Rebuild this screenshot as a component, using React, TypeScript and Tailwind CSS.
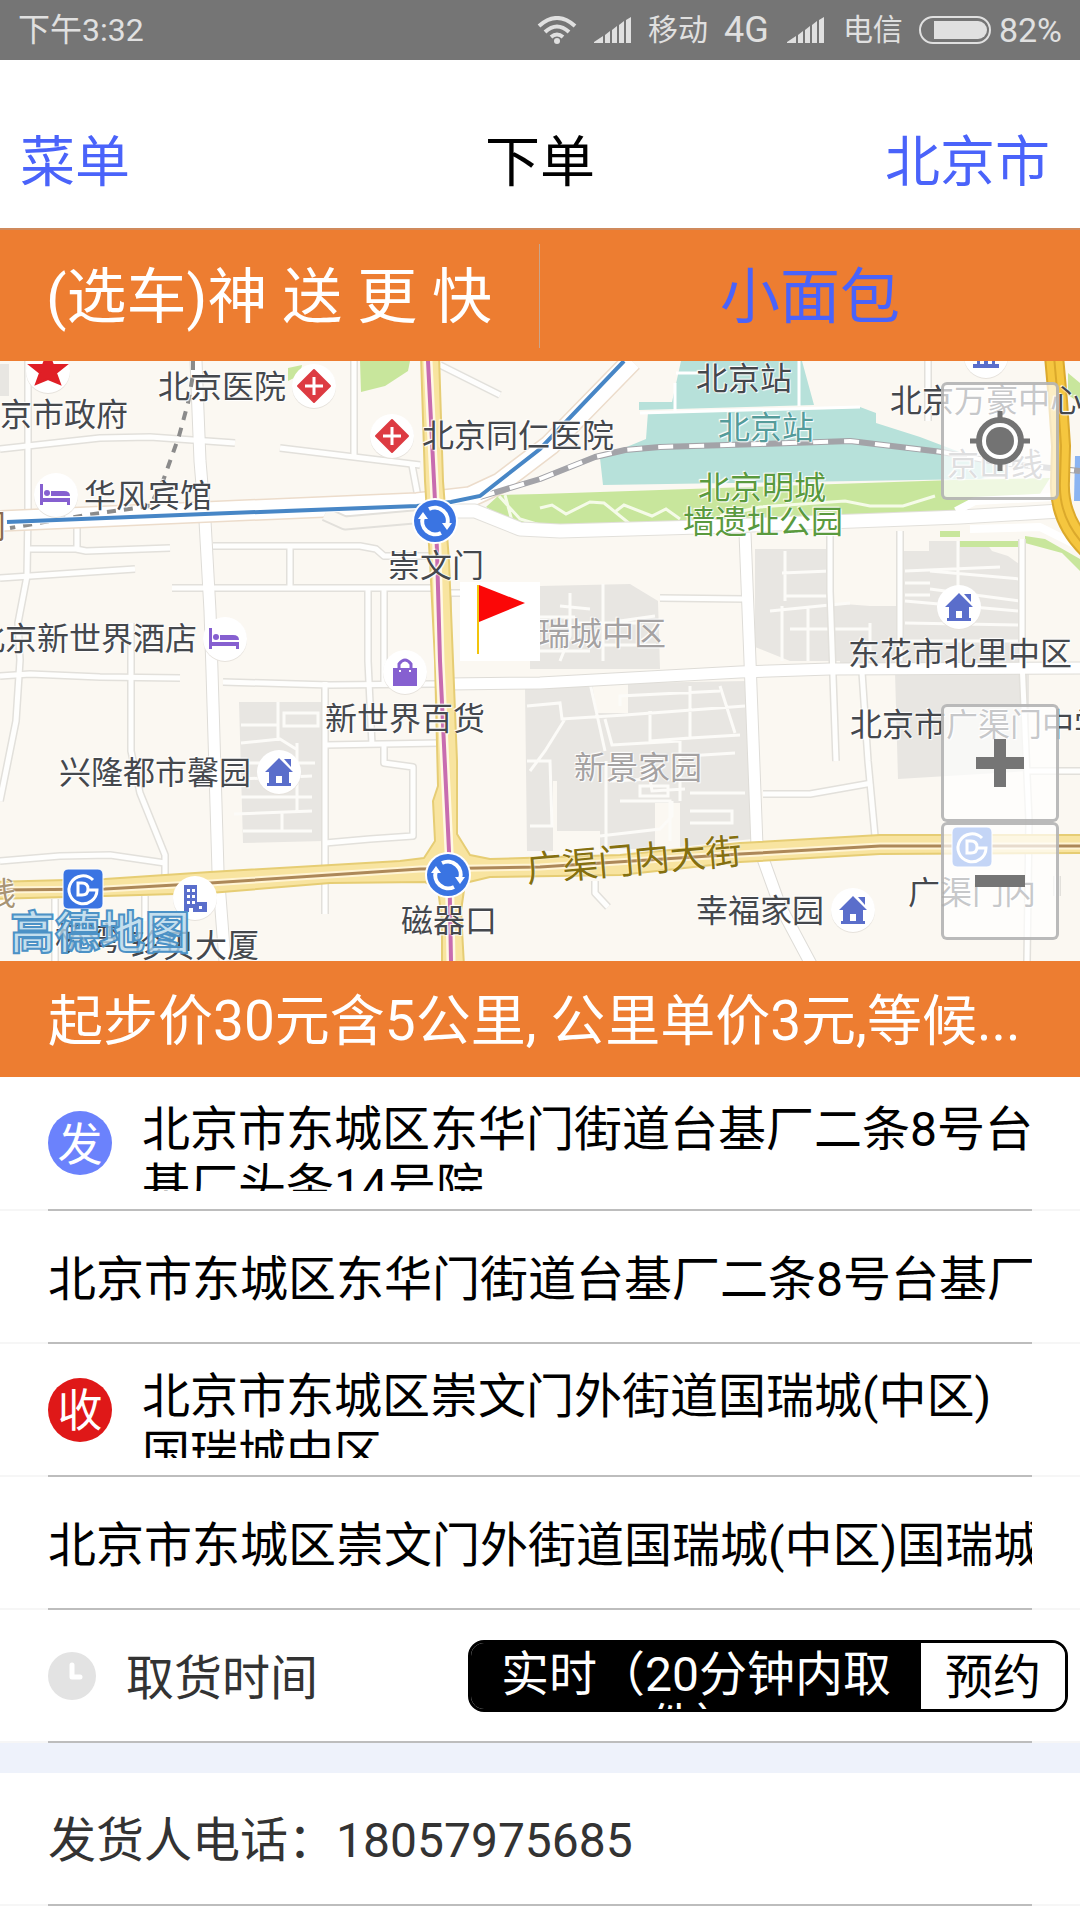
import { useState } from "react";

type Point = { x: number; y: number };

type Label = Point & {
  text: string;
  color?: string;
  right?: boolean;
};

const FONT = "font-[Roboto,'Noto_Sans_CJK_SC',sans-serif]";

// x is the left edge (or the right one when `right` is set), y the middle of the line
const labels: Label[] = [
  { text: "北京医院", x: 158, y: 26 },
  { text: "北京市政府", x: 128, y: 54, right: true },
  { text: "北京同仁医院", x: 422, y: 75 },
  { text: "华风宾馆", x: 84, y: 135 },
  { text: "前门", x: 6, y: 166, right: true, color: "text-[#8a6a50]" },
  { text: "崇文门", x: 388, y: 205 },
  { text: "北京新世界酒店", x: 197, y: 278, right: true },
  { text: "北京站", x: 696, y: 18 },
  { text: "北京站", x: 718, y: 67, color: "text-[#559c9a]" },
  { text: "北京明城", x: 698, y: 127, color: "text-[#5a9a3e]" },
  { text: "墙遗址公园", x: 683, y: 161, color: "text-[#5a9a3e]" },
  { text: "北京万豪中心", x: 890, y: 40 },
  { text: "京山线", x: 947, y: 104, color: "text-[#8f8f95]" },
  { text: "瑞城中区", x: 538, y: 273, color: "text-[#a5a2a2]" },
  { text: "东花市北里中区", x: 848, y: 293 },
  { text: "新世界百货", x: 325, y: 358 },
  { text: "北京市广渠门中学", x: 850, y: 364 },
  { text: "新景家园", x: 574, y: 407, color: "text-[#a5a2a2]" },
  { text: "兴隆都市馨园", x: 59, y: 412 },
  { text: "广渠门内", x: 908, y: 532 },
  { text: "线", x: 16, y: 533, right: true, color: "text-[#a89474]" },
  { text: "幸福家园", x: 696, y: 550 },
  { text: "磁器口", x: 401, y: 560 },
  { text: "桥湾", x: 55, y: 578 },
  { text: "珍贝大厦", x: 131, y: 585 },
];

const smallRoads = [
  "M28 0V150L27 215 18 262 20 299 16 360 0 440",
  "M0 88 100 77 150 76 235 82",
  "M280 87 420 104",
  "M354 0V96",
  "M412 104 418 136",
  "M0 217 135 208",
  "M27 188H76L86 190 170 187",
  "M77 164V186",
  "M213 185H360L376 188 384 195H430",
  "M290 185V227",
  "M172 227H432",
  "M368 227V300L372 384",
  "M384 227V322",
  "M131 262V390L140 432 165 494V520",
  "M0 315 30 313 100 316 180 317",
  "M223 321 330 324 540 322",
  "M325 321V553",
  "M325 384 440 382",
  "M384 384V402L413 406V475L370 478 325 482",
  "M0 500 60 495 110 494 165 502",
  "M440 4 500 34",
  "M460 232H448V380",
  "M55 538V600",
  "M145 535V560",
  "M830 172V230L836 400",
  "M900 170V300",
  "M862 311 868 400 875 475",
  "M763 433 810 433 872 422",
  "M1022 178V300L1029 460 1027 600",
  "M1029 410H1080",
  "M660 237 745 238",
  "M595 520V532L608 546",
  "M1057 515V535",
  "M928 0V60",
];

const bigRoads = [
  "M196 0 200 100 205 160 210 250 212 310 218 510 225 600",
  "M448 323 540 322 740 311 830 308 1080 307",
  "M745 172 750 300 757 485",
  "M762 495 780 545 812 605",
];

function RoadMap() {
  return (
    <svg viewBox="0 0 1080 600" preserveAspectRatio="xMidYMid slice" className="block h-full w-full" aria-hidden="true">
      <rect width="1080" height="600" fill="#fbf8f2" />

      {/* blocks of buildings */}
      <g fill="#e8e6e2">
        <path d="M0 3H9V35H0z" />
        <path d="M239 341H324V480L243 482z" />
        <path d="M540 225 630 223 658 240 660 308H530V232z" />
        <path d="M755 188H830L831 242 870 245V300H790L755 286z" />
        <path d="M903 190H929V180H985L992 190 1008 195 1022 205V308H840V266L870 262V245H903z" />
        <path d="M525 326 592 322 597 352H628V322L747 320 752 478 680 486V442H655V488H600V470H557V420H553V490H527z" />
        <path d="M895 311H1029V410L898 418z" />
      </g>
      <g fill="none" stroke="#fcfbf8" strokeWidth="3">
        <path d="M241 364H278M241 382 280 378 296 388M278 341V380M240 402H315M240 418 312 415M241 436H312M234 453 312 450M243 470H312M282 452V470M297 382V450M284 352H318V365H284z" />
        <path d="M540 256H575M570 232V275L560 300M603 223V300M560 245 590 248M620 260 655 255M575 262H640M540 290H590M600 284H656" />
        <path d="M785 190V240M782 212 830 210M785 235H830M770 250 850 242M782 245V300M808 245V300M790 268H870M870 262V300" />
        <path d="M905 210 1000 206M905 222H930M905 234H930M958 180V225M930 210 1020 218M930 228 1020 240M905 240 1018 250M905 262 1018 264M905 280H1020" />
        <path d="M527 345 560 342 562 358 625 354 745 345M565 358 545 390 530 410M590 322 605 390M605 358 612 384 680 380M620 345V335L720 330M650 350V380L690 377V325M680 380V440M690 377 740 374M720 325 735 372M612 420 650 418 652 430 685 428M620 440H670V480M600 475 660 468 672 455V440M687 395 735 392M690 432H745M690 450H732V462H690M606 400V490M527 400 550 400 552 465H530M640 425H668V435H640z" />
      </g>

      {/* station */}
      <g fill="#b7e1da">
        <path d="M681 0H802L814 44 675 48 639 49V41H672z" />
        <path d="M648 51 860 46 876 52V62L920 76 970 95 1010 112 980 118 603 124 600 97 646 78z" />
      </g>
      <path d="M676 12H700M675 50V22M799 0V45M640 52 860 46" fill="none" stroke="#fff" strokeWidth="3" />

      {/* parks */}
      <g fill="#c8e69c">
        <path d="M360 0H410L408 10 385 25 361 31z" />
        <path d="M288 7 302 4 300 14 288 20z" />
        <path d="M486 146 499 134 540 133 600 131 953 119 1050 117 1040 133 985 139 960 150 760 159 640 165 520 166z" />
        <path d="M940 170H960V180H1018V186H960V176H940z" />
        <path d="M1025 175 1045 178 1080 198V210L1062 192 1025 182z" />
        <path d="M1068 12 1080 22V42L1068 34z" />
      </g>
      <path
        d="M499 135 520 158 540 164M505 134 512 160M540 147 552 144 566 153 590 141 604 142 630 163M616 150 624 144 652 155 666 148 680 158M720 155 760 146 845 140 870 145 903 145 935 135"
        fill="none"
        stroke="#f5fbe8"
        strokeWidth="3"
      />
      <path d="M1075 95H1080V140H1074z" fill="#8ab4f2" />

      <g fill="none" strokeLinejoin="round">
        <g stroke="#e2e0db" strokeWidth="8">
          {smallRoads.map((d) => (
            <path key={d} d={d} />
          ))}
        </g>
        <g stroke="#dedcd7" strokeWidth="13">
          {bigRoads.map((d) => (
            <path key={d} d={d} />
          ))}
        </g>
        <g stroke="#fefefd" strokeWidth="5">
          {smallRoads.map((d) => (
            <path key={d} d={d} />
          ))}
        </g>
        <g stroke="#ffffff" strokeWidth="11">
          {bigRoads.map((d) => (
            <path key={d} d={d} />
          ))}
        </g>

        {/* road on both sides of the blue line */}
        <path d="M0 160 205 151 417 142 470 136 500 122 550 84 632 0" stroke="#ecdccb" strokeWidth="22" />
        <path d="M0 160 205 151 417 142 470 136 500 122 550 84 632 0" stroke="#fff" strokeWidth="19" />
        <path d="M325 153 345 162 425 155M430 150 475 150 520 168 560 170 700 166 960 156 1060 150" stroke="#e2e0db" strokeWidth="15" />
        <path d="M325 153 345 162 425 155" stroke="#fbf8f2" strokeWidth="11" />
        <path d="M430 150 475 150 520 168 560 170 700 166 960 156 1060 150" stroke="#fff" strokeWidth="13" />
        <path d="M956 150 975 140 1055 136M970 168 1040 166 1080 186" stroke="#fff" strokeWidth="8" />

        {/* railway */}
        <path d="M480 136 540 118 595 96 625 89 660 86 760 83 850 80 942 91 1000 102 1080 110" stroke="#a3a3a8" strokeWidth="6" />
        <path d="M480 136 540 118 595 96 625 89 660 86 760 83 850 80 942 91 1000 102 1080 110" stroke="#fff" strokeWidth="4" strokeDasharray="15 16" />
        <path d="M193 0V14L188 42 179 75 163 120 150 145 86 154 10 167" stroke="#8b8b8b" strokeWidth="4" strokeDasharray="9 8" />

        {/* ring road */}
        <path d="M1054 -5 1058 40 1061 85 1060 120Q1058 160 1090 190" stroke="#dba92c" strokeWidth="20" />
        <path d="M1054 -5 1058 40 1061 85 1060 120Q1058 160 1090 190" stroke="#f5c63f" strokeWidth="16" />
        <path d="M1054 -5 1058 40 1061 85 1060 120Q1058 160 1090 190" stroke="#dba92c" strokeWidth="2" />
      </g>

      {/* avenues */}
      <g fill="#f8e4a0" stroke="#e6cd74" strokeWidth="2" strokeLinejoin="round">
        <path d="M-5 521 105 518 210 511 400 500 424 497 435 480 433 440 438 425 435 300 430 200 425 120 421 -5H439L443 120 449 200 453 300 457 400 457 473 470 494 490 498 620 494 740 482 880 474 1085 474V492L880 493 740 501 620 514 490 516 465 522 461 550 464 605H442V560L438 528 425 521 330 522 210 532 105 535 -5 538z" />
      </g>
      <g fill="none">
        <path d="M428 0 435 140 437 190 440 300 449 490 451 600" stroke="#fff8e4" strokeWidth="9" />
        <path d="M428 0 435 140 437 190 440 300 449 490 451 600" stroke="#c86cb0" strokeWidth="4" />
        <path d="M0 529 105 528 210 522 420 508 540 506 740 493 880 485 1080 485" stroke="#fff4d4" strokeWidth="7" />
        <path d="M0 529 105 528 210 522 420 508 540 506 740 493 880 485 1080 485" stroke="#ad8858" strokeWidth="3" />
        <path d="M7 161 205 153 417 145 451 141 480 135 540 88 624 0" stroke="#fff" strokeWidth="6" />
        <path d="M7 161 205 153 417 145 451 141 480 135 540 88 624 0" stroke="#4786c6" strokeWidth="4" />
      </g>
    </svg>
  );
}

function Disc({ x, y }: Point) {
  return (
    <>
      <circle cx={x} cy={y + 1} r="22" fill="#e6e2dc" />
      <circle cx={x} cy={y} r="22" fill="#fff" />
    </>
  );
}

function Hospital({ x, y }: Point) {
  return (
    <g>
      <Disc x={x} y={y} />
      <g transform={`translate(${x} ${y})`}>
        <path d="M0 -16 16 0 0 16 -16 0z" fill="#dd3b42" stroke="#dd3b42" strokeWidth="2" strokeLinejoin="round" />
        <path d="M0 -9V9M-9 0H9" stroke="#fff" strokeWidth="3" />
      </g>
    </g>
  );
}

function Hotel({ x, y }: Point) {
  return (
    <g>
      <Disc x={x} y={y} />
      <g transform={`translate(${x} ${y})`} fill="#8660d0">
        <path d="M-16 -11H-13V3H14V10H11V7H-13V10H-16z" />
        <circle cx="-9" cy="-2" r="3" />
        <path d="M-5 1V-4H8Q14 -4 14 1z" />
      </g>
    </g>
  );
}

function House({ x, y }: Point) {
  return (
    <g>
      <Disc x={x} y={y} />
      <g transform={`translate(${x} ${y})`} fill="#5a6ecb">
        <path d="M0 -14 14 0H10V11H12V14H-12V11H-10V0H-14z" />
        <path d="M5 -13H12V-5z" />
        <path d="M-3 4H3V11H-3z" fill="#fff" />
      </g>
    </g>
  );
}

function Interchange({ x, y }: Point) {
  return (
    <g transform={`translate(${x} ${y})`}>
      <circle r="23" fill="#fff" />
      <circle r="21" fill="#3a74e2" />
      <g fill="none" stroke="#fff" strokeWidth="4">
        <path d="M-6 -12A13 13 0 0 1 12 4" />
        <path d="M6 12A13 13 0 0 1 -12 -4" />
      </g>
      <path d="M7 2H17L12 9zM-7 -2H-17L-12 -9z" fill="#fff" />
    </g>
  );
}

function Subway({ x, y }: Point) {
  return (
    <g transform={`translate(${x} ${y})`}>
      <rect x="-20" y="-20" width="40" height="40" rx="5" fill="#3a74e2" stroke="#fff" />
      <path d="M10 -9A14 14 0 1 0 14 1H5" fill="none" stroke="#fff" strokeWidth="3" />
      <path d="M-5 -6H-1Q5 -6 5 0T-1 6H-5z" fill="none" stroke="#fff" strokeWidth="3" />
    </g>
  );
}

function Pins() {
  return (
    <svg viewBox="0 0 1080 600" preserveAspectRatio="xMidYMid slice" className="absolute inset-0 h-full w-full" aria-hidden="true">
      <Disc x={48} y={10} />
      <path d="M48 -9 53 4 66 4 56 12 60 23 48 18 36 23 40 12 30 4 43 4z" fill="#e01f26" stroke="#e01f26" strokeWidth="2" />
      <Hospital x={314} y={25} />
      <Hospital x={392} y={75} />
      <Hotel x={56} y={134} />
      <Hotel x={225} y={278} />
      <Disc x={405} y={311} />
      <path d="M393 307H417V325H393z" fill="#8660d0" />
      <path d="M399 308V303Q405 295 411 303V308" fill="none" stroke="#8660d0" strokeWidth="3" />
      <path d="M399 309H401V311H399zM409 309H411V311H409z" fill="#fff" />
      <House x={959} y={246} />
      <House x={279} y={411} />
      <House x={853} y={549} />
      <Interchange x={435} y={160} />
      <Interchange x={448} y={514} />
      <Subway x={83} y={528} />
      <Subway x={972} y={486} />
      <Disc x={195} y={537} />
      <path d="M184 524H197V541H207V551H184z" fill="#5a6ecb" />
      <path d="M187 528H190V531H187zM192 528H195V531H192zM187 534H190V537H187zM192 534H195V537H192zM187 540H190V543H187zM192 540H195V543H192zM189 547H193V551H189zM199 545H202V548H199z" fill="#fff" />
      <Disc x={986} y={-5} />
      <path d="M973 3H999V7H973zM977 -4H980V3H977zM984 -4H988V3H984zM992 -4H995V3H992z" fill="#5a6ecb" />

      {/* destination flag */}
      <path d="M460 221H540V300H460z" fill="#fff" />
      <path d="M478 224V293" stroke="#f2c40c" strokeWidth="2" />
      <path d="M479 224 525 242 479 261z" fill="#fb0707" />
    </svg>
  );
}

function MapView() {
  const button =
    "flex h-[118px] w-[118px] items-center justify-center rounded-md border-3 border-[#a9a9a9]/80 bg-white/70";

  return (
    <section className="relative h-[600px] overflow-hidden">
      <RoadMap />

      {labels.map((l) => (
        <span
          key={l.text + l.y}
          className={`absolute -translate-y-1/2 text-[32px] leading-8 whitespace-nowrap [text-shadow:0_0_2px_#fff,1px_1px_1px_#fff,-1px_-1px_1px_#fff] ${l.right ? "-translate-x-full" : ""} ${l.color ?? "text-[#45484d]"}`}
          style={{ left: l.x, top: l.y }}
        >
          {l.text}
        </span>
      ))}
      <span className="absolute top-[480px] left-[526px] -rotate-5 text-[36px] leading-10 whitespace-nowrap text-[#85700f] [text-shadow:0_0_2px_#fff]">
        广渠门内大街
      </span>

      <Pins />

      <span className="absolute top-[549px] left-2.5 text-[45px] leading-[48px] font-bold whitespace-nowrap text-[#b5d8ee]/80 [-webkit-text-stroke:2px_#4c92c6]">
        高德地图
      </span>

      <button aria-label="定位" className={`absolute top-[21px] right-[21px] ${button}`}>
        <svg viewBox="0 0 60 60" className="h-[60px] w-[60px]">
          <path d="M30 0V12M30 48V60M0 30H12M48 30H60" stroke="#737373" strokeWidth="5" />
          <circle cx="30" cy="30" r="21" fill="#fff" stroke="#737373" strokeWidth="6" />
          <circle cx="30" cy="30" r="14" fill="#737373" />
        </svg>
      </button>
      <div className="absolute right-[21px] bottom-[21px] flex flex-col">
        <button aria-label="放大" className={button}>
          <svg viewBox="0 0 50 50" className="h-[50px] w-[50px]">
            <path d="M25 1V49M1 25H49" stroke="#757575" strokeWidth="12" />
          </svg>
        </button>
        <button aria-label="缩小" className={button}>
          <svg viewBox="0 0 50 50" className="h-[50px] w-[50px]">
            <path d="M0 25H50" stroke="#757575" strokeWidth="12" />
          </svg>
        </button>
      </div>
    </section>
  );
}

function Signal() {
  return (
    <svg viewBox="0 0 38 26" className="h-[26px] w-[38px]" fill="#e0e0e0">
      <path d="M0 26V25L9 19V26zM11 26V18L16 14V26zM18 26V13L23 9V26zM25 26V8L30 4V26zM32 26V3L37 0V26z" />
    </svg>
  );
}

function StatusBar() {
  return (
    <div className="flex h-15 items-center justify-between bg-[#757575] px-[18px] text-[32px] leading-10 text-[#e0e0e0]">
      <span>下午3:32</span>
      <div className="flex items-center">
        <svg viewBox="0 0 40 28" className="mr-[17px] h-7 w-10" fill="none" stroke="#e0e0e0" strokeWidth="4">
          <path d="M2 10Q20 -6 38 10M8 16Q20 5 32 16M14 21Q20 16 26 21" />
          <circle cx="20" cy="25" r="3" fill="#e0e0e0" stroke="none" />
        </svg>
        <Signal />
        <span className="mx-4 text-[30px]">移动</span>
        <span className="mr-[18px] text-[36px]">4G</span>
        <Signal />
        <span className="mr-4 ml-[18px] text-[30px]">电信</span>
        <svg viewBox="0 0 72 28" className="mr-2 h-7 w-[72px]">
          <rect x="1" y="1" width="70" height="26" rx="13" fill="none" stroke="#e0e0e0" strokeWidth="2" />
          <path d="M15 5H59A9 9 0 0 1 59 23H15z" fill="#e0e0e0" />
        </svg>
        <span className="text-[34px]">82%</span>
      </div>
    </div>
  );
}

function Divider() {
  return (
    <div className="bg-[#f6f6f6] px-12">
      <div className="h-0.5 bg-[#bdbdbd]" />
    </div>
  );
}

export default function App() {
  const [from, setFrom] = useState("北京市东城区东华门街道台基厂二条8号台基厂头条14号院");
  const [to, setTo] = useState("北京市东城区崇文门外街道国瑞城(中区)国瑞城中区");
  const [phone, setPhone] = useState("18057975685");
  const [realtime, setRealtime] = useState(true);

  return (
    <div className={`w-full overflow-hidden bg-white text-black ${FONT}`}>

      <StatusBar />

      <header className="grid h-42 grid-cols-3 items-center px-5 pt-9 text-[55px] leading-[64px]">
        <button className="justify-self-start text-[#4a63fa]">菜单</button>
        <h1 className="justify-self-center">下单</h1>
        <button className="mr-2.5 justify-self-end text-[#4a63fa]">北京市</button>
      </header>

      <div className="grid h-[133px] grid-cols-2 items-center border-t-2 border-[#d08a5c] bg-[#ed7d31] text-[60px] leading-[70px]">
        <div className="flex h-[104px] items-center border-r border-[#c9a58c] pt-1 pl-[46px] whitespace-nowrap text-white">
          (选车)神 送 更 快
        </div>
        <button className="pt-1 text-[#4a63fa]">小面包</button>
      </div>

      <MapView />

      <p className="flex h-[116px] items-center bg-[#ed7d31] px-12 pt-1 text-[55px] leading-[64px] whitespace-nowrap text-white">
        起步价30元含5公里, 公里单价3元,等候...
      </p>

      <div className="text-[48px] leading-[57px]">

        <div className="flex h-[132px] items-center pr-11 pl-12">
          <span className="flex h-16 w-16 shrink-0 items-center justify-center rounded-full bg-[#6b82fc] pt-1 text-[45px] text-white">
            发
          </span>
          <p className="mt-1.5 ml-[30px] h-[90px] overflow-hidden">{from}</p>
        </div>
        <Divider />

        <div className="flex h-[131px] items-center px-12 pt-1.5">
          <input aria-label="发货地址" value={from} onChange={(e) => setFrom(e.target.value)} className="w-full outline-none" />
        </div>
        <Divider />

        <div className="flex h-[131px] items-center pr-11 pl-12">
          <span className="flex h-16 w-16 shrink-0 items-center justify-center rounded-full bg-[#df1818] pt-1 text-[45px] text-white">
            收
          </span>
          <p className="mt-1.5 ml-[30px] h-[90px] overflow-hidden">{to}</p>
        </div>
        <Divider />

        <div className="flex h-[131px] items-center px-12 pt-1.5">
          <input aria-label="收货地址" value={to} onChange={(e) => setTo(e.target.value)} className="w-full outline-none" />
        </div>
        <Divider />

        <div className="flex h-[131px] items-center pr-3 pl-12 text-[#333]">
          <svg viewBox="0 0 48 48" className="h-12 w-12">
            <circle cx="24" cy="24" r="24" fill="#e3e3e3" />
            <path d="M24 13V25H32" fill="none" stroke="#fff" strokeWidth="5" strokeLinecap="round" strokeLinejoin="round" />
          </svg>
          <span className="ml-[30px] pt-1.5">取货时间</span>
          <div className="ml-auto flex h-[72px] w-[600px] overflow-hidden rounded-2xl border-3 border-black">
            <button
              aria-pressed={realtime}
              onClick={() => setRealtime(true)}
              className={`flex w-[450px] shrink-0 items-start justify-center overflow-hidden px-6 pt-1.5 leading-[52px] ${realtime ? "bg-black text-white" : "bg-white text-black"}`}
            >
              <span>实时（20分钟内取件）</span>
            </button>
            <button
              aria-pressed={!realtime}
              onClick={() => setRealtime(false)}
              className={`flex-1 pt-1 ${realtime ? "bg-white text-black" : "bg-black text-white"}`}
            >
              预约
            </button>
          </div>
        </div>
        <Divider />

        <div className="h-[30px] bg-[#eef2fb]" />

        <div className="flex h-[131px] items-center px-12 pt-1 text-[#333]">
          <label htmlFor="phone" className="shrink-0">发货人电话：</label>
          <input id="phone" value={phone} onChange={(e) => setPhone(e.target.value)} className="w-full min-w-0 outline-none" />
        </div>
        <Divider />

      </div>

    </div>
  );
}
